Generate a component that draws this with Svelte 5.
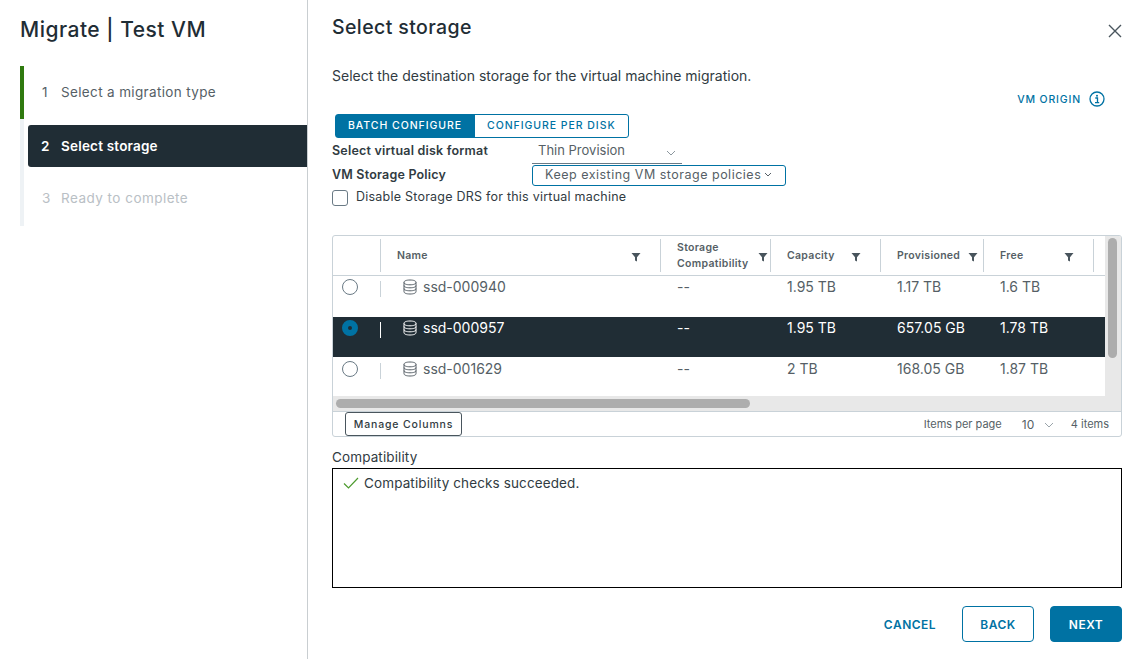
<script>
	const columns = [
		{ label: 'Name', pr: 19 },
		{ label: 'Storage Compatibility', pr: 2 },
		{ label: 'Capacity', pr: 19 },
		{ label: 'Provisioned', pr: 5 },
		{ label: 'Free', pr: 19 }
	];

	const rows = [
		{ name: 'ssd-000940', compat: '--', capacity: '1.95 TB', provisioned: '1.17 TB', free: '1.6 TB' },
		{ name: 'ssd-000957', compat: '--', capacity: '1.95 TB', provisioned: '657.05 GB', free: '1.78 TB', selected: true },
		{ name: 'ssd-001629', compat: '--', capacity: '2 TB', provisioned: '168.05 GB', free: '1.87 TB' }
	];
</script>

<div class="wizard">
	<aside class="sidebar">
		<h1>Migrate | Test VM</h1>
		<ol class="steps">
			<li class="step done"><span class="num">1</span>Select a migration type</li>
			<li class="step current"><span class="num">2</span>Select storage</li>
			<li class="step todo"><span class="num">3</span>Ready to complete</li>
		</ol>
	</aside>

	<main class="content">
		<header class="top">
			<h2>Select storage</h2>
			<svg class="close" viewBox="0 0 14 14" width="14" height="14">
				<path d="M1 1l12 12M13 1L1 13" stroke="#49555d" stroke-width="1.4" fill="none" />
			</svg>
		</header>

		<p class="desc">Select the destination storage for the virtual machine migration.</p>

		<div class="origin">
			<span>VM ORIGIN</span>
			<svg viewBox="0 0 16 16" width="16" height="16">
				<circle cx="8" cy="8" r="7" stroke="#0072a3" stroke-width="1.3" fill="none" />
				<circle cx="8" cy="4.7" r="1" fill="#0072a3" />
				<path d="M6.3 7h2.2v4.4M6 11.6h4.2" stroke="#0072a3" stroke-width="1.3" fill="none" />
			</svg>
		</div>

		<div class="toggle">
			<span class="seg on">BATCH CONFIGURE</span>
			<span class="seg">CONFIGURE PER DISK</span>
		</div>

		<div class="field first">
			<span class="label">Select virtual disk format</span>
			<div class="select">
				<span>Thin Provision</span>
				<svg viewBox="0 0 10 6" width="10" height="6"><path d="M1 1l4 4 4-4" stroke="#8c979e" fill="none" /></svg>
			</div>
		</div>

		<div class="field second">
			<span class="label">VM Storage Policy</span>
			<div class="policy">
				<span>Keep existing VM storage policies</span>
				<svg viewBox="0 0 8 5" width="8" height="5"><path d="M1 1l3 3 3-3" stroke="#565f66" fill="none" /></svg>
			</div>
		</div>

		<label class="check">
			<span class="box"></span>
			Disable Storage DRS for this virtual machine
		</label>

		<section class="grid">
			<div class="grid-top">
				<div class="grid-main">
					<div class="cols head">
						<div class="cell-radio"><i></i></div>
						{#each columns as col}
							<div class="th" style="padding-right: {col.pr}px">
								<span class="th-label">{col.label}</span>
								<svg viewBox="0 0 10 10" width="10" height="10"><path d="M0.5 1h9L6 5.2V9.5L4 8.6V5.2z" fill="#49555d" /></svg>
							</div>
						{/each}
					</div>
					<div class="body">
						{#each rows as row}
							<div class="cols row" class:selected={row.selected}>
								<div class="cell-radio">
									<span class="radio"></span>
									<i></i>
								</div>
								<div class="td name">
									<svg viewBox="0 0 14 16" width="14" height="16">
										<g fill="none" stroke="currentColor" stroke-width="1">
											<path d="M1 3.4C1 1.8 3.5 1 7 1s6 .8 6 2.4v9.2c0 1.6-2.5 2.4-6 2.4s-6-.8-6-2.4z" />
											<path d="M1 3.4C1 5 3.5 5.8 7 5.8S13 5 13 3.4M1 6.6c0 1.4 2.5 2.2 6 2.2s6-.8 6-2.2M1 9.6c0 1.4 2.5 2.2 6 2.2s6-.8 6-2.2" />
										</g>
									</svg>
									{row.name}
								</div>
								<div class="td">{row.compat}</div>
								<div class="td">{row.capacity}</div>
								<div class="td">{row.provisioned}</div>
								<div class="td">{row.free}</div>
							</div>
						{/each}
					</div>
					<div class="hscroll"><span></span></div>
				</div>
				<div class="vscroll"><span></span></div>
			</div>
			<footer class="grid-foot">
				<button class="manage">Manage Columns</button>
				<div class="pager">
					<span>Items per page</span>
					<div class="per-page">
						<span>10</span>
						<svg viewBox="0 0 10 6" width="10" height="6"><path d="M1 1l4 4 4-4" stroke="#9aa4aa" fill="none" /></svg>
					</div>
					<span>4 items</span>
				</div>
			</footer>
		</section>

		<div class="compat-label">Compatibility</div>
		<div class="compat">
			<svg viewBox="0 0 16 12" width="16" height="12"><path d="M1 6.5l4.5 4.5L15 1" stroke="#4d9b2f" stroke-width="1.2" fill="none" /></svg>
			Compatibility checks succeeded.
		</div>

		<div class="actions">
			<button class="btn link">CANCEL</button>
			<button class="btn outline">BACK</button>
			<button class="btn primary">NEXT</button>
		</div>
	</main>
</div>

<style>
	:global(body) {
		margin: 0;
		background: #fff;
		overflow: hidden;
	}

	.wizard {
		display: flex;
		height: 659px;
		font-family: Inter, 'Noto Sans', sans-serif;
		color: #313b42;
	}

	.sidebar {
		width: 308px;
		flex: none;
		box-sizing: border-box;
		border-right: 1px solid #c9ced1;
		padding: 18px 0 0 20px;
	}

	h1 {
		margin: 0 0 24px;
		font-size: 21px;
		line-height: 24px;
		font-weight: 500;
		letter-spacing: 0.5px;
		color: #1f2d35;
	}

	.steps {
		margin: 0;
		padding: 0;
		list-style: none;
		border-left: 4px solid #eef2f5;
		height: 160px;
	}

	.step {
		display: flex;
		align-items: center;
		font-size: 13.5px;
		letter-spacing: 0.35px;
		color: #565f66;
		margin-left: -4px;
		padding-left: 22px;
	}

	.num {
		width: 19px;
		flex: none;
	}

	.done {
		height: 53px;
		box-sizing: border-box;
		border-left: 4px solid #2f7a0f;
		padding-left: 18px;
		padding-bottom: 2px;
	}

	.current {
		height: 42px;
		margin: 6px 0 0 4px;
		padding-left: 13px;
		background: #202d35;
		color: #fff;
		font-weight: 600;
		letter-spacing: 0.2px;
		border-radius: 3px 0 0 3px;
	}

	.current .num {
		width: 20px;
	}

	.todo {
		color: #b9c0c5;
		height: 62px;
		letter-spacing: 0.47px;
	}

	.content {
		flex: 1;
		min-width: 0;
		padding: 0 19px 0 24px;
	}

	.top {
		display: flex;
		justify-content: space-between;
		align-items: center;
		height: 54px;
	}

	h2 {
		margin: 0;
		font-size: 19.5px;
		line-height: 24px;
		font-weight: 500;
		letter-spacing: 0.4px;
		color: #1f2d35;
	}

	.close {
		margin: 8px 0 0 0;
	}

	.desc {
		margin: 12px 0 0;
		font-size: 14px;
		line-height: 20px;
	}

	.origin {
		display: flex;
		justify-content: flex-end;
		align-items: center;
		gap: 8px;
		height: 16px;
		margin: 5px 17px 0 0;
		font-size: 10.5px;
		font-weight: 500;
		letter-spacing: 0.85px;
		color: #0072a3;
	}

	.toggle {
		display: inline-flex;
		margin: 7px 0 0 3px;
		height: 24px;
		box-sizing: border-box;
		border: 1px solid #0072a3;
		border-radius: 3px;
		font-size: 10.5px;
		font-weight: 500;
		letter-spacing: 0.95px;
		color: #0072a3;
		vertical-align: top;
	}

	.seg {
		display: flex;
		align-items: center;
		padding: 0 12px 2px;
	}

	.seg.on {
		background: #0072a3;
		color: #fff;
		padding-right: 13px;
	}

	.field {
		display: flex;
		font-size: 12.5px;
		letter-spacing: 0.2px;
	}

	.first {
		height: 26px;
		align-items: flex-start;
		line-height: 26px;
	}

	.second {
		height: 23px;
		align-items: center;
	}

	.second .label {
		margin-top: -3px;
	}

	.label {
		width: 200px;
		flex: none;
		font-weight: 600;
	}

	.select {
		display: flex;
		align-items: center;
		justify-content: space-between;
		width: 150px;
		height: 26px;
		box-sizing: border-box;
		padding: 0 6px 2px 6px;
		border-bottom: 1px solid #6a7a85;
		color: #565f66;
		font-size: 13px;
		letter-spacing: 0;
	}

	.select svg {
		margin-top: 7px;
	}

	.policy {
		display: flex;
		align-items: center;
		justify-content: space-between;
		width: 254px;
		height: 21px;
		box-sizing: border-box;
		padding: 0 13px 2px 12px;
		border: 1px solid #0072a3;
		border-radius: 3px;
		color: #565f66;
		font-size: 12.5px;
		letter-spacing: 0.5px;
	}

	.check {
		display: flex;
		align-items: center;
		gap: 8px;
		height: 21px;
		box-sizing: border-box;
		padding-bottom: 2px;
		font-size: 12.5px;
		letter-spacing: 0.23px;
	}

	.box {
		width: 16px;
		height: 16px;
		margin-top: 2px;
		box-sizing: border-box;
		border: 1px solid #6a7a85;
		border-radius: 3px;
	}

	.grid {
		margin-top: 27px;
		height: 202px;
		box-sizing: border-box;
		border: 1px solid #c9d2d8;
		border-radius: 3px;
		overflow: hidden;
	}

	.grid-top {
		display: flex;
		height: 175px;
		border-bottom: 1px solid #c9d2d8;
	}

	.grid-main {
		flex: 1;
		min-width: 0;
		display: flex;
		flex-direction: column;
	}

	.cols {
		display: grid;
		grid-template-columns: 48px 280px 110px 110px 103px 110px 1fr;
	}

	.head {
		height: 40px;
		box-sizing: border-box;
		border-bottom: 1px solid #c9d2d8;
	}

	.cell-radio {
		position: relative;
	}

	.cell-radio i {
		position: absolute;
		right: 0;
		top: 3px;
		bottom: 3px;
		width: 1px;
		background: #c9d2d8;
	}

	.th {
		display: flex;
		align-items: center;
		justify-content: space-between;
		padding-left: 16px;
		border-right: 1px solid #c9d2d8;
		margin: 3px 0;
		font-size: 10.5px;
		line-height: 16px;
		font-weight: 600;
		letter-spacing: 0.3px;
		color: #565f66;
		box-sizing: border-box;
	}

	.th svg {
		flex: none;
		margin-top: 2px;
	}

	.th-label {
		max-width: 80px;
	}

	.body {
		height: 120px;
		overflow: hidden;
	}

	.row {
		height: 41px;
		box-sizing: border-box;
		border-bottom: 1px solid transparent;
		background-clip: padding-box;
		color: #565f66;
		font-size: 14px;
	}

	.row.selected {
		background-color: #202d35;
		color: #fff;
	}

	.row .cell-radio i {
		top: 5px;
		bottom: auto;
		height: 16px;
	}

	.row.selected .cell-radio i {
		background: #fff;
	}

	.radio {
		position: absolute;
		left: 9px;
		top: 3px;
		width: 16px;
		height: 16px;
		box-sizing: border-box;
		border: 1px solid #6a7a85;
		border-radius: 50%;
		background: #fff;
	}

	.selected .radio {
		border: 6px solid #0072a3;
		background: #202d35;
	}

	.td {
		padding: 2px 0 0 16px;
		line-height: 18px;
	}

	.name {
		display: flex;
		align-items: flex-start;
		gap: 6px;
		padding-left: 22px;
	}

	.name svg {
		margin-top: 1px;
		flex: none;
	}

	.hscroll {
		height: 15px;
		background: #e8e8e8;
		padding: 3px 0 0 3px;
		box-sizing: border-box;
	}

	.hscroll span {
		display: block;
		width: 414px;
		height: 9px;
		border-radius: 5px;
		background: #adadad;
	}

	.vscroll {
		width: 16px;
		flex: none;
		background: #e8e8e8;
		padding: 2px 0 0 3px;
		box-sizing: border-box;
	}

	.vscroll span {
		display: block;
		width: 9px;
		height: 120px;
		border-radius: 5px;
		background: #adadad;
	}

	.grid-foot {
		display: flex;
		justify-content: space-between;
		height: 25px;
		padding: 0 12px;
		font-size: 11px;
		color: #565f66;
	}

	.manage {
		height: 24px;
		width: 117px;
		padding: 0;
		background: #fff;
		border: 1px solid #49555d;
		border-radius: 3px;
		font: 500 10.5px Inter, sans-serif;
		letter-spacing: 0.85px;
		color: #313b42;
	}

	.pager {
		display: flex;
		align-items: center;
		height: 24px;
	}

	.per-page {
		display: flex;
		align-items: center;
		justify-content: space-between;
		width: 42px;
		height: 25px;
		box-sizing: border-box;
		margin: 0 12px 0 15px;
		padding: 2px 5px 0;
		border-bottom: 1px solid #6a7a85;
		font-size: 12px;
	}

	.compat-label {
		margin-top: 11px;
		font-size: 13.5px;
		line-height: 18px;
		letter-spacing: 0.12px;
	}

	.compat {
		display: flex;
		align-items: center;
		gap: 5px;
		margin-top: 2px;
		height: 120px;
		box-sizing: border-box;
		border: 1.5px solid #000;
		padding: 0 0 91px 10px;
		font-size: 13.5px;
		letter-spacing: 0.12px;
	}

	.actions {
		display: flex;
		justify-content: flex-end;
		align-items: center;
		gap: 16px;
		margin-top: 18px;
	}

	.btn {
		width: 72px;
		height: 36px;
		padding: 0;
		border-radius: 4px;
		font: 600 12px Inter, sans-serif;
		letter-spacing: 0.5px;
		color: #0072a3;
		background: #fff;
		border: 1px solid #0072a3;
	}

	.btn.link {
		border: none;
	}

	.btn.primary {
		background: #0072a3;
		color: #fff;
	}
</style>
